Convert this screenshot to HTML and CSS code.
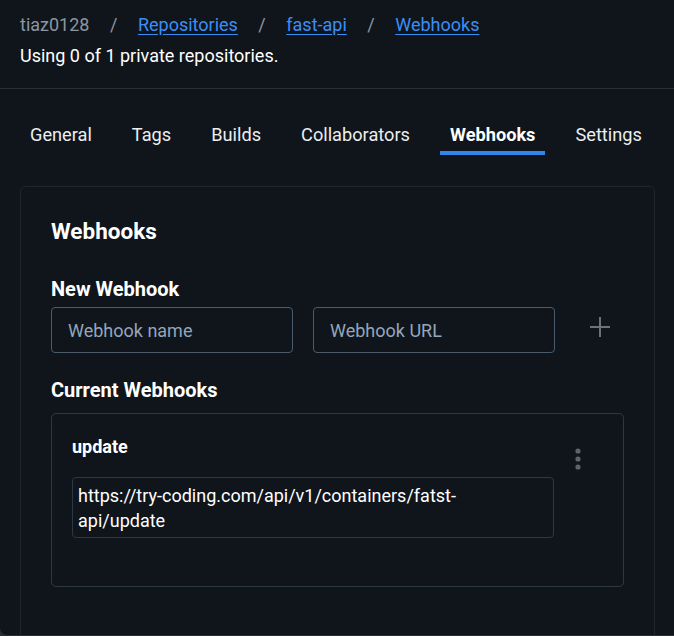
FILE: index.html
```html
<!DOCTYPE html>
<html>
<head>
<meta charset="utf-8">
<link rel="stylesheet" href="styles.css">
</head>
<body>
<div class="page">
  <header class="header">
    <nav class="crumbs">
      <span class="crumb-user">tiaz0128</span>
      <span class="sep">/</span>
      <a class="crumb-link" href="#">Repositories</a>
      <span class="sep">/</span>
      <a class="crumb-link" href="#">fast-api</a>
      <span class="sep">/</span>
      <a class="crumb-link" href="#">Webhooks</a>
    </nav>
    <p class="usage">Using 0 of 1 private repositories.</p>
  </header>
  <nav class="tabs">
    <span class="tab">General</span>
    <span class="tab">Tags</span>
    <span class="tab">Builds</span>
    <span class="tab">Collaborators</span>
    <span class="tab active">Webhooks</span>
    <span class="tab">Settings</span>
  </nav>
  <section class="card">
    <h2 class="card-title">Webhooks</h2>
    <h3 class="label">New Webhook</h3>
    <div class="new-row">
      <input class="field" type="text" placeholder="Webhook name">
      <input class="field" type="text" placeholder="Webhook URL">
      <button class="add-btn" aria-label="Add">
        <svg width="20" height="20" viewBox="0 0 20 20"><path d="M10 0v20M0 10h20" stroke="#6c7278" stroke-width="2" fill="none"/></svg>
      </button>
    </div>
    <h3 class="label current">Current Webhooks</h3>
    <div class="hook">
      <div class="hook-main">
        <div class="hook-name">update</div>
        <div class="hook-url">https://try-coding.com/api/v1/containers/fatst-api/update</div>
      </div>
      <button class="kebab" aria-label="More">
        <svg width="8" height="24" viewBox="0 0 8 24"><circle cx="4" cy="4" r="2.6" fill="#5e6369"/><circle cx="4" cy="12" r="2.6" fill="#5e6369"/><circle cx="4" cy="20" r="2.6" fill="#5e6369"/></svg>
      </button>
    </div>
  </section>
</div>
</body>
</html>
```

FILE: styles.css
```css
html {
  background: #2a2d31;
}
body {
  margin: 0;
  font-family: Roboto, "Liberation Sans", sans-serif;
  color: #ffffff;
}
.page {
  background: #10151c;
  height: 635px;
  overflow: hidden;
  border-bottom-left-radius: 7px;
}
.header {
  padding: 14px 20px 0;
  height: 74px;
  border-bottom: 1px solid #2a2f35;
}
.crumbs {
  font-size: 18px;
  line-height: 22px;
  display: flex;
}
.crumb-user {
  color: #8c96a1;
}
.sep {
  color: #8c96a1;
  padding: 0 20.5px;
}
.crumb-link {
  color: #3b8ef6;
  text-decoration: underline;
  text-underline-offset: 3px;
}
.usage {
  margin: 10px 0 0;
  font-size: 18px;
  line-height: 20px;
  color: #ffffff;
}
.tabs {
  display: flex;
  gap: 20px;
  padding: 0 20px;
  margin-top: 35px;
  height: 31px;
}
.tab {
  padding: 0 10px;
  font-size: 18.2px;
  line-height: 22px;
  color: #eceef0;
  height: 27px;
}
.tab.active {
  font-weight: 700;
  color: #ffffff;
  border-bottom: 4px solid #3286ea;
}
.card {
  margin: 31px 19px 0 20px;
  border: 1px solid #1f252c;
  border-radius: 5px;
  padding: 30px 30px 40px;
  height: 600px;
}
.card-title {
  margin: 0;
  font-size: 22.5px;
  line-height: 28px;
  font-weight: 700;
}
.label {
  margin: 32px 0 0;
  font-size: 20px;
  line-height: 24px;
  font-weight: 700;
}
.label.current {
  margin-top: 25px;
}
.new-row {
  display: flex;
  align-items: center;
  gap: 20px;
  margin-top: 6px;
}
.field {
  width: 242px;
  height: 46px;
  box-sizing: border-box;
  background: transparent;
  border: 1px solid #4a5b6c;
  border-radius: 4px;
  padding: 0 16px;
  font-family: Roboto, "Liberation Sans", sans-serif;
  font-size: 18px;
  color: #ffffff;
  outline: none;
}
.field::placeholder {
  color: #93a6ba;
}
.add-btn {
  background: none;
  border: 0;
  padding: 0;
  margin-left: 15px;
  display: flex;
  margin-top: -6px;
}
.hook {
  margin-top: 11px;
  border: 1px solid #2b3945;
  border-radius: 5px;
  padding: 20px;
  display: flex;
  gap: 20px;
  height: 174px;
  box-sizing: border-box;
}
.hook-main {
  width: 482px;
}
.hook-name {
  font-size: 18px;
  line-height: 26px;
  font-weight: 700;
}
.hook-url {
  margin-top: 17px;
  border: 1px solid #2b3945;
  border-radius: 4px;
  padding: 5px 30px 4px 5px;
  font-size: 18px;
  line-height: 25px;
  color: #ffffff;
}
.kebab {
  background: none;
  border: 0;
  padding: 0;
  margin-top: 13px;
  align-self: flex-start;
  display: flex;
}
```
